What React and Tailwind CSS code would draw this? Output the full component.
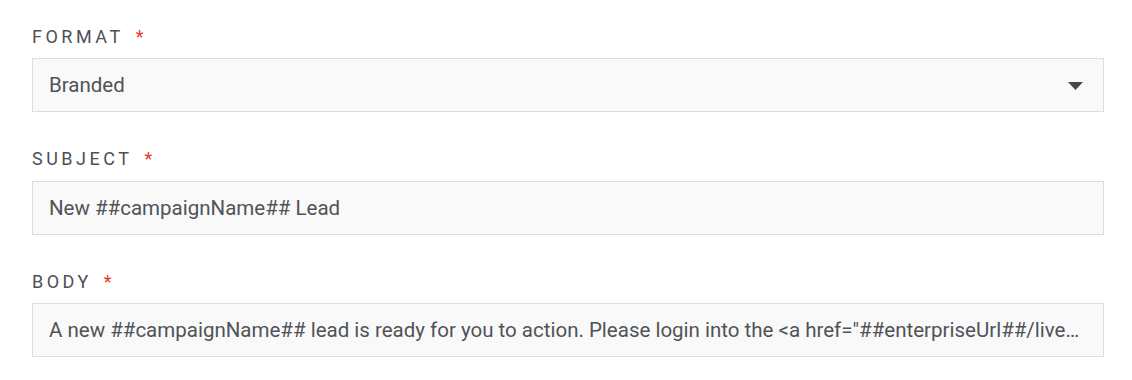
const FIELDS = [
  { label: "FORMAT", value: "Branded", select: true },
  { label: "SUBJECT", value: "New ##campaignName## Lead" },
  {
    label: "BODY",
    value:
      'A new ##campaignName## lead is ready for you to action. Please login into the <a href="##enterpriseUrl##/live/leads">Live Leads</a> area to view the details.',
  },
];

function Field({ label, value, select }) {
  return (
    <div className="flex flex-col">
      <div className="flex h-6 items-center text-[18px] tracking-[3.5px] text-[#4d5055]">
        {label}
        <span className="ml-3 text-[#e5392d]">*</span>
      </div>
      <div className="mt-[10px] flex h-[54px] items-center border border-[#dddddd] bg-[#f9f9f9] pl-4 pr-5 pt-px">
        <span className="flex-1 truncate text-[20.5px] text-[#505357]">{value}</span>
        {select && (
          <svg width="15" height="8" viewBox="0 0 15 8" className="ml-4 shrink-0">
            <path d="M0 0h15L7.5 8z" fill="#45474b" />
          </svg>
        )}
      </div>
    </div>
  );
}

export default function App() {
  return (
    <div
      className="flex min-h-[380px] flex-col gap-[34.5px] bg-white px-8 pt-6 pr-7"
      style={{ fontFamily: "Roboto, 'Liberation Sans', sans-serif" }}
    >
      {FIELDS.map((f) => (
        <Field key={f.label} {...f} />
      ))}
    </div>
  );
}
